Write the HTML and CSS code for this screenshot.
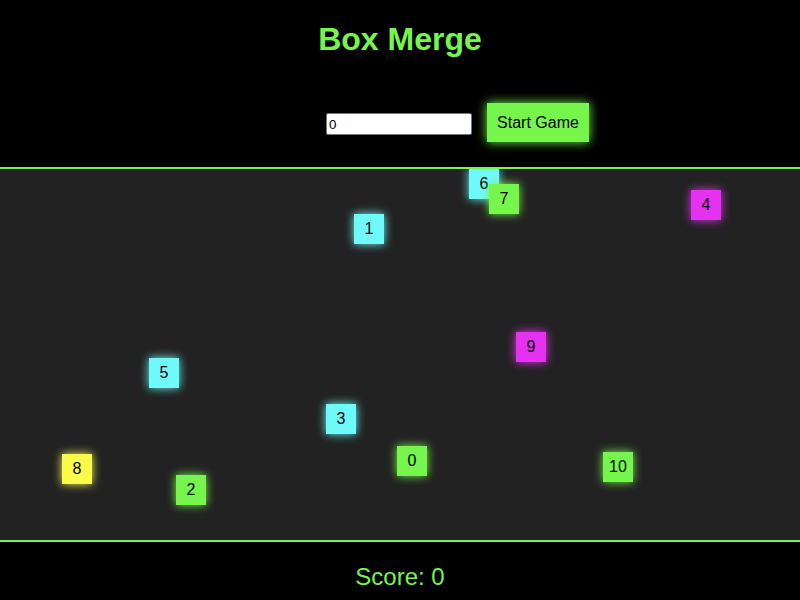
FILE: index.html
```html
<!DOCTYPE html>
<html>
<head>
<meta charset="utf-8">
<title>Box Merge</title>
<link rel="stylesheet" href="styles.css">
</head>
<body>
<h1 class="title">Box Merge</h1>
<div class="controls">
  <input class="count-input" type="text" value="0">
  <button class="start-btn">Start Game</button>
</div>
<div class="game-area">
  <div class="box green" style="left:397px;top:277px">0</div>
  <div class="box cyan" style="left:354px;top:45px">1</div>
  <div class="box green" style="left:176px;top:306px">2</div>
  <div class="box cyan" style="left:326px;top:235px">3</div>
  <div class="box magenta" style="left:691px;top:21px">4</div>
  <div class="box cyan" style="left:149px;top:189px">5</div>
  <div class="box cyan" style="left:469px;top:0px">6</div>
  <div class="box green" style="left:489px;top:15px">7</div>
  <div class="box yellow" style="left:62px;top:285px">8</div>
  <div class="box magenta" style="left:516px;top:163px">9</div>
  <div class="box green" style="left:603px;top:283px">10</div>
</div>
<p class="score">Score: 0</p>
</body>
</html>
```
FILE: styles.css
```css
html, body {
  margin: 0;
  padding: 0;
  background: #000;
  font-family: "Liberation Sans", Arial, sans-serif;
}
.title {
  margin: 21px 0 0;
  font-size: 32px;
  line-height: 37px;
  font-weight: bold;
  color: #76f54c;
  text-align: center;
}
.controls {
  display: flex;
  align-items: flex-start;
  gap: 15px;
  margin-top: 45px;
  padding-left: 326px;
  height: 39px;
}
.count-input {
  box-sizing: border-box;
  width: 146px;
  height: 22px;
  margin: 10px 0 0;
  padding: 1px 2px;
  border: 1px solid #767676;
  border-radius: 2px;
  background: #fff;
  font-family: "Liberation Sans", Arial, sans-serif;
  font-size: 13.33px;
  color: #000;
}
.start-btn {
  box-sizing: border-box;
  width: 102px;
  height: 39px;
  padding: 0;
  border: none;
  background: #76f54c;
  color: #000;
  font-family: "Liberation Sans", Arial, sans-serif;
  font-size: 16px;
  box-shadow: 0 0 10px #76f54c;
  cursor: pointer;
}
.game-area {
  position: relative;
  margin-top: 25px;
  height: 371px;
  background: #222;
  border-top: 2px solid #76f54c;
  border-bottom: 2px solid #76f54c;
  overflow: hidden;
}
.box {
  position: absolute;
  width: 30px;
  height: 30px;
  display: flex;
  align-items: center;
  justify-content: center;
  font-size: 16px;
  color: #000;
}
.green { background: #76f54c; box-shadow: 0 0 10px #76f54c; }
.cyan { background: #6ffafa; box-shadow: 0 0 10px #6ffafa; }
.magenta { background: #e631f0; box-shadow: 0 0 10px #e631f0; }
.yellow { background: #fafa4a; box-shadow: 0 0 10px #fafa4a; }
.score {
  margin: 21px 0 0;
  font-size: 24px;
  line-height: 28px;
  color: #76f54c;
  text-align: center;
}
```
